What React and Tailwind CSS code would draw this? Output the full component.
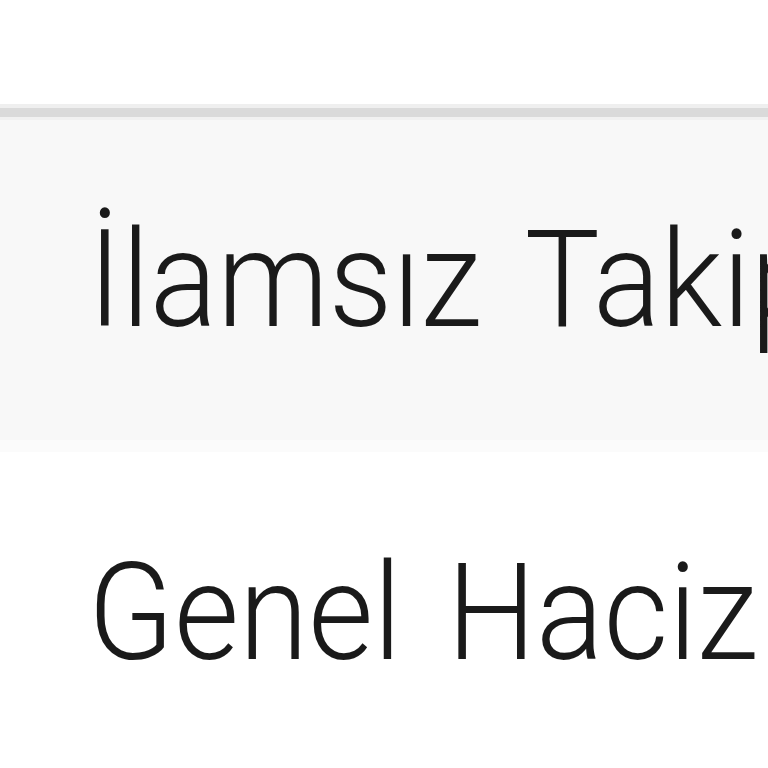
export default function App() {
  const font = { fontFamily: 'Roboto, "Liberation Sans", sans-serif' };
  const txt = "inline-block origin-left scale-x-[0.925] text-[136px] font-light tracking-normal [word-spacing:16px] leading-none text-[#1a1a1a] whitespace-nowrap";
  return (
    <div className="w-[768px] h-[768px] overflow-hidden bg-white flex flex-col" style={font}>
      <div className="h-[104px] bg-white shrink-0" />
      <div className="h-[4px] bg-[#efefef] shrink-0" />
      <div className="h-[9px] bg-[#dadada] shrink-0" />
      <div className="h-[3px] bg-[#f1f1f1] shrink-0" />
      <div className="h-[320px] bg-[#f8f8f8] shrink-0 flex items-center pl-[88px]">
        <span className={txt}>İlamsız Takip</span>
      </div>
      <div className="h-[12px] bg-[#fbfbfb] shrink-0" />
      <div className="flex-1 bg-white flex items-center pl-[88px] pt-[6px]">
        <span className={txt}>Genel Haciz</span>
      </div>
    </div>
  );
}
